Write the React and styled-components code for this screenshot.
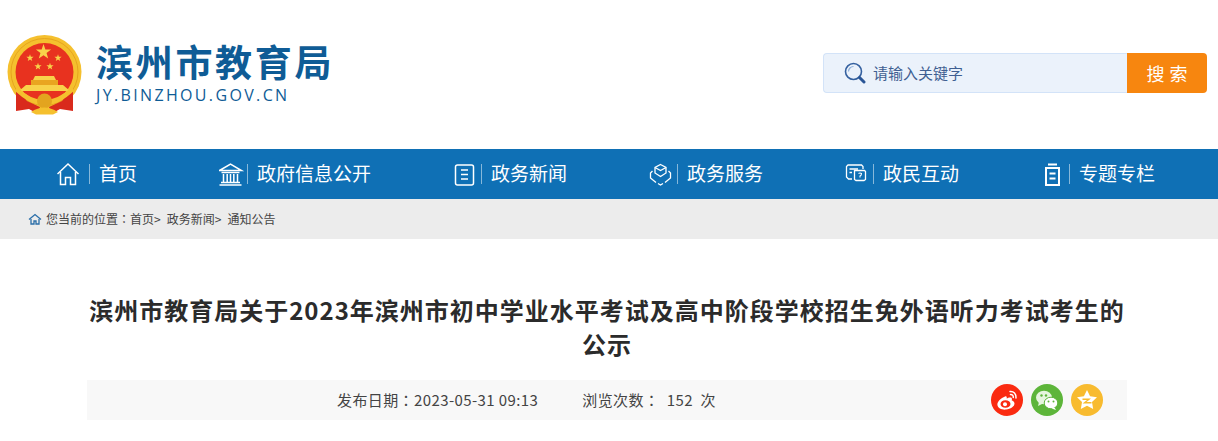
import styled, { createGlobalStyle } from "styled-components";

const FONT = '"Noto Sans CJK SC", "Liberation Sans", sans-serif';

const GlobalStyle = createGlobalStyle`
  html, body {
    margin: 0;
    padding: 0;
    background: #fff;
    font-family: ${FONT};
    overflow-x: hidden;
  }
`;

const Page = styled.div`
  width: 1218px;
`;

/* header */
const Header = styled.header`
  height: 149px;
  display: flex;
  align-items: flex-start;
  justify-content: space-between;
  padding: 35px 11px 0 7px;
  box-sizing: border-box;
`;

const Logo = styled.div`
  display: flex;
  align-items: flex-start;
`;

const LogoText = styled.div`
  margin-left: 14px;
  padding-top: 4px;
  display: flex;
  flex-direction: column;
`;

const LogoTitle = styled.div`
  font-size: 37px;
  line-height: 44px;
  font-weight: 700;
  color: #0f5c96;
  letter-spacing: 2.7px;
  white-space: nowrap;
`;

const LogoSub = styled.div`
  margin-top: 1px;
  font-family: "Open Sans", "Liberation Sans", sans-serif;
  font-size: 16px;
  line-height: 22px;
  color: #0f5c96;
  letter-spacing: 2.35px;
  white-space: nowrap;
`;

const Search = styled.div`
  margin-top: 18px;
  width: 384px;
  height: 40px;
  display: flex;
`;

const SearchField = styled.div`
  flex: 1;
  display: flex;
  align-items: center;
  padding-left: 20px;
  gap: 7px;
  box-sizing: border-box;
  background: #ebf2fb;
  border: 1px solid #d3e3f8;
  border-right: none;
  border-radius: 4px 0 0 4px;
  font-size: 15px;
  color: #3f5f92;
`;

const SearchHint = styled.span`
  margin-top: -2px;
`;

const SearchButton = styled.div`
  width: 80px;
  display: flex;
  align-items: center;
  justify-content: center;
  background: #f7860f;
  border-radius: 0 4px 4px 0;
  color: #fff;
  font-size: 18px;
  letter-spacing: 5px;
  text-indent: 5px;
`;

/* nav */
const Nav = styled.nav`
  height: 50px;
  background: #0f70b5;
  display: grid;
  grid-template-columns: 162px 234px 196px 196px 198px auto;
  padding-left: 57px;
  align-items: center;
`;

const NavItem = styled.div`
  display: flex;
  align-items: center;
  color: #fff;
  font-size: 19px;
  line-height: 24px;
  white-space: nowrap;
`;

const NavLabel = styled.span`
  margin-top: -2px;
`;

const NavIcon = styled.span`
  width: ${(p) => p.$w}px;
  height: 24px;
  display: block;

  svg {
    display: block;
  }
`;

const NavSep = styled.span`
  width: 1px;
  height: 20px;
  margin-right: 9px;
  background: rgba(255, 255, 255, 0.5);
`;

/* breadcrumb */
const Crumbs = styled.div`
  height: 40px;
  background: #ececec;
  display: flex;
  align-items: center;
  padding-left: 28px;
  font-size: 12px;
  color: #444;
  white-space: nowrap;
`;

const CrumbText = styled.span`
  margin-top: -2px;
  margin-right: ${(p) => p.$gap || 0}px;
`;

const CrumbIcon = styled.svg`
  width: 14px;
  height: 12px;
  margin-right: 4px;
`;

// the TC cut sets the full-width colon in the middle of its box
const Colon = styled.span`
  font-family: "Noto Sans CJK TC", sans-serif;
`;

/* article */
const Article = styled.main`
  width: 1040px;
  margin-left: 87px;
  padding-top: 54px;
`;

const Title = styled.h1`
  margin: 0;
  font-size: 24px;
  line-height: 34px;
  font-weight: 700;
  letter-spacing: 1px;
  color: #2b2b2b;
  text-align: center;
`;

const Meta = styled.div`
  margin-top: 19px;
  height: 40px;
  background: #f8f8f8;
  display: flex;
  align-items: center;
  padding: 0 24px 0 250px;
  font-size: 15px;
  letter-spacing: 0.4px;
  color: #444;
`;

const MetaText = styled.span`
  margin-top: -2px;
  margin-right: ${(p) => p.$gap || 0}px;
  white-space: pre;
`;

const Shares = styled.div`
  margin-left: auto;
  display: flex;
  gap: 8px;
`;

const Share = styled.span`
  width: 32px;
  height: 32px;
  border-radius: 50%;
  background: ${(p) => p.$bg};
  display: flex;
  align-items: center;
  justify-content: center;
`;

const starPoints = (cx, cy, r, inner = 0.4) => {
  const pts = [];
  for (let i = 0; i < 10; i++) {
    const rad = i % 2 === 0 ? r : r * inner;
    const a = (Math.PI / 5) * i - Math.PI / 2;
    pts.push(`${(cx + rad * Math.cos(a)).toFixed(2)},${(cy + rad * Math.sin(a)).toFixed(2)}`);
  }
  return pts.join(" ");
};

const Emblem = () => (
  <svg width="75" height="80" viewBox="0 0 75 80">
    <circle cx="37.5" cy="37" r="37" fill="#f5c02e" />
    <circle cx="37.5" cy="37" r="33.500" fill="none" stroke="#e6a51e" strokeWidth="1" />
    <circle cx="37.5" cy="37" r="29" fill="#e8321f" />
    <polygon points={starPoints(36.5, 17, 8)} fill="#f8d24a" />
    <polygon points={starPoints(23, 23, 3.8)} fill="#f8d24a" />
    <polygon points={starPoints(51, 23, 3.8)} fill="#f8d24a" />
    <polygon points={starPoints(31, 31.5, 3.8)} fill="#f8d24a" />
    <polygon points={starPoints(43, 31.5, 3.8)} fill="#f8d24a" />
    <path d="M26 45 L28 41 H47 L49 45Z" fill="#f8d24a" />
    <path d="M24 50 V45 H51 V50Z" fill="#e9a520" />
    <path d="M12 56 L19 50 H56 L63 56Z" fill="#f8d24a" />
    <path d="M9 54 L9 76 L22 74 L31 79 L33 72 L20 66Z" fill="#d92a1c" />
    <path d="M66 54 L66 76 L53 74 L44 79 L42 72 L55 66Z" fill="#d92a1c" />
    <path d="M10 52 Q37 78 65 52 L67 56 Q37 84 8 56Z" fill="#f5c02e" />
    <circle cx="37.5" cy="66" r="7.500" fill="#e3a41f" />
    <path d="M24 77 Q37 68 51 77 L46 79.500 H29Z" fill="#f5c02e" />
  </svg>
);

const SearchIcon = () => (
  <svg width="22" height="22" viewBox="0 0 22 22" fill="none">
    <circle cx="9.5" cy="9.5" r="8" stroke="#34609f" strokeWidth="1.6" />
    <path d="M4.5 9.5a5 5 0 0 1 5-5" stroke="#8fb0da" strokeWidth="1.2" />
    <path d="M15.5 15.5 L20 20" stroke="#2a5596" strokeWidth="3" strokeLinecap="round" />
  </svg>
);

const HomeIcon = () => (
  <svg width="32" height="24" viewBox="0 0 32 24" fill="none" stroke="#fff" strokeWidth="1.5">
    <path d="M0.5 12 L11 2 L21.5 12" />
    <path d="M3.5 10 V22.5 H8.5 V15.5 H13.5 V22.5 H18.5 V10" />
  </svg>
);

const GovIcon = () => (
  <svg width="28" height="24" viewBox="0 0 28 24" fill="none" stroke="#fff" strokeWidth="1.5">
    <path d="M0.5 8.5 L11.5 2 L22.5 8.5Z" />
    <path d="M2.5 10.5 H20.5" />
    <path d="M4.5 12 V20 M8.2 12 V20 M11.5 12 V20 M14.8 12 V20 M18.5 12 V20" />
    <path d="M2 20.5 H21 M0.5 23 H22.5" />
  </svg>
);

const NewsIcon = () => (
  <svg width="28" height="24" viewBox="0 0 28 24" fill="none" stroke="#fff" strokeWidth="1.5">
    <rect x="2.5" y="3" width="18" height="20" rx="2" />
    <path d="M8 8 H15 M8 12.5 H15 M8 17 H15" />
  </svg>
);

const ServiceIcon = () => (
  <svg width="28" height="24" viewBox="0 0 28 24" fill="none" stroke="#fff" strokeWidth="1.3">
    <path d="M11.5 2.5 L17 5.500 V11 L11.5 14.500 L6 11 V5.500Z" />
    <path d="M6 5.500 L11.5 8.500 L17 5.500" />
    <path d="M3.500 9 L1.500 11 V16 L7 20.500 M19.500 9 L21.500 11 V16 L16 20.500 M9 21.500 L11.500 23 L14 21.500" />
  </svg>
);

const TalkIcon = () => (
  <svg width="28" height="24" viewBox="0 0 28 24" fill="none" stroke="#fff" strokeWidth="1.3">
    <path d="M7 17 H3.5 L1.5 15 V4.500 L3 3 H16.500 L18 4.500 V7" />
    <path d="M4.500 7 H13 M4.500 10.500 H7" />
    <path d="M9.500 8.500 H19.500 L20.500 9.500 V17.500 L19 18.500 H11 L9.500 17.500Z" />
    <path d="M13.500 11.500 Q15 10.500 16.500 11.500 Q16.500 13.500 15 14 V15.500" strokeWidth="1.1" />
  </svg>
);

const TopicIcon = () => (
  <svg width="26" height="24" viewBox="0 0 26 24" fill="none" stroke="#fff">
    <path d="M5 2.5 H14" strokeWidth="2" />
    <rect x="3" y="6" width="13" height="17" strokeWidth="2" />
    <path d="M6.5 11.5 H12.5 M6.5 16.5 H12.5" strokeWidth="1.8" />
  </svg>
);

const WeiboIcon = () => (
  <svg width="24" height="24" viewBox="0 0 24 24">
    <path d="M10 8.5c-4 1.5-8 5.3-7.6 8.6C2.900 20.500 7 22 11 21.600c4.500-.4 8.500-3 8.500-6 0-1.800-1.500-2.800-2.800-3.100.5-1.300.3-2.500-.8-2.900-1.200-.4-3 .2-4.200.9.300-1.800-.2-2.800-1.700-2z" fill="#fff" />
    <ellipse cx="10.500" cy="16" rx="5" ry="3.800" fill="#fa2a10" />
    <circle cx="10" cy="16.200" r="2" fill="#fff" />
    <path d="M15 3.500c3.500-.5 6.500 2.500 6 6.500M15.500 6.500c1.700-.2 3 1.200 2.800 3" fill="none" stroke="#fff" strokeWidth="1.500" strokeLinecap="round" />
  </svg>
);

const WechatIcon = () => (
  <svg width="26" height="24" viewBox="0 0 26 24">
    <ellipse cx="10" cy="9.500" rx="8" ry="6.800" fill="#e6f5de" />
    <path d="M5 14 L4 18 L9 15.500Z" fill="#e6f5de" />
    <ellipse cx="17" cy="15" rx="6.800" ry="5.800" fill="#fff" stroke="#5db53a" strokeWidth="1" />
    <path d="M20.500 19.500 L22 22 L17.500 20.500Z" fill="#fff" />
    <circle cx="7.500" cy="7.500" r="1.200" fill="#5db53a" />
    <circle cx="12" cy="7.500" r="1.200" fill="#5db53a" />
    <circle cx="14.500" cy="13.500" r="1" fill="#5db53a" />
    <circle cx="19.500" cy="13.500" r="1" fill="#5db53a" />
  </svg>
);

const QzoneIcon = () => (
  <svg width="24" height="24" viewBox="0 0 24 24">
    <polygon points={starPoints(12, 12.500, 10.500, 0.5)} fill="#fff" />
    <path d="M7.500 10.500 H16 L11.500 14 H16.500 V15.500 H7.500 L12 12 H7.500Z" fill="#f8bb2f" />
  </svg>
);

const navItems = [
  { label: "首页", w: 32, Icon: HomeIcon },
  { label: "政府信息公开", w: 28, Icon: GovIcon },
  { label: "政务新闻", w: 28, Icon: NewsIcon },
  { label: "政务服务", w: 28, Icon: ServiceIcon },
  { label: "政民互动", w: 28, Icon: TalkIcon },
  { label: "专题专栏", w: 26, Icon: TopicIcon },
];

export default function App() {
  return (
    <Page>
      <GlobalStyle />
      <Header>
        <Logo>
          <Emblem />
          <LogoText>
            <LogoTitle>滨州市教育局</LogoTitle>
            <LogoSub>JY.BINZHOU.GOV.CN</LogoSub>
          </LogoText>
        </Logo>
        <Search>
          <SearchField>
            <SearchIcon />
            <SearchHint>请输入关键字</SearchHint>
          </SearchField>
          <SearchButton>搜索</SearchButton>
        </Search>
      </Header>

      <Nav>
        {navItems.map(({ label, w, Icon }) => (
          <NavItem key={label}>
            <NavIcon $w={w}>
              <Icon />
            </NavIcon>
            <NavSep />
            <NavLabel>{label}</NavLabel>
          </NavItem>
        ))}
      </Nav>

      <Crumbs>
        <CrumbIcon viewBox="0 0 14 12" fill="none" stroke="#2a6ea8" strokeWidth="1.3">
          <path d="M1 6.500 L7 1.500 L13 6.500" />
          <path d="M3 6 V11 H6 V8 H8 V11 H11 V6" />
        </CrumbIcon>
        <CrumbText>您当前的位置<Colon>：</Colon></CrumbText>
        <CrumbText $gap={6}>首页&gt;</CrumbText>
        <CrumbText $gap={6}>政务新闻&gt;</CrumbText>
        <CrumbText>通知公告</CrumbText>
      </Crumbs>

      <Article>
        <Title>滨州市教育局关于2023年滨州市初中学业水平考试及高中阶段学校招生免外语听力考试考生的公示</Title>
        <Meta>
          <MetaText $gap={44}>发布日期<Colon>：</Colon>2023-05-31 09:13</MetaText>
          <MetaText>浏览次数<Colon>：</Colon>  152  次</MetaText>
          <Shares>
            <Share $bg="#fa2a10"><WeiboIcon /></Share>
            <Share $bg="#5db53a"><WechatIcon /></Share>
            <Share $bg="#f8bb2f"><QzoneIcon /></Share>
          </Shares>
        </Meta>
      </Article>
    </Page>
  );
}
